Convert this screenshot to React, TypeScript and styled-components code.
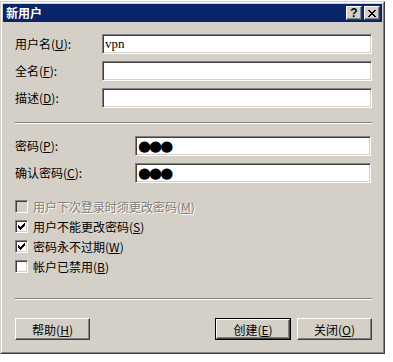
import * as React from 'react';
import styled, { createGlobalStyle, css } from 'styled-components';

const FACE = '#d4d0c8';
const SHADOW = '#808080';
const DARK = '#404040';

const GlobalStyle = createGlobalStyle`
    html, body {
        margin: 0;
        padding: 0;
        background: #fff;
    }
    body {
        font-family: "Noto Sans CJK SC", "Liberation Sans", sans-serif;
        font-size: 12px;
        color: #000;
    }
`;

const Window = styled.div`
    box-sizing: border-box;
    width: 385px;
    height: 353px;
    margin-top: 1px;
    display: flex;
    flex-direction: column;
    background: ${FACE};
    padding: 1px;
    border: 1px solid;
    border-color: ${FACE} ${DARK} ${DARK} ${FACE};
    position: relative;

    &::before {
        content: '';
        position: absolute;
        inset: 0;
        border: 1px solid;
        border-color: #fff ${SHADOW} ${SHADOW} #fff;
        pointer-events: none;
    }
`;

const TitleBar = styled.div`
    height: 18px;
    margin: 1px 1px 0 1px;
    background: #0a246a;
    display: flex;
    align-items: center;
    padding: 0 2px 0 3px;
`;

const Title = styled.div`
    flex: 1;
    color: #fff;
    font-weight: bold;
    font-size: 12px;
    line-height: 18px;
`;

const raised = css`
    background: ${FACE};
    border: 1px solid;
    border-color: #fff ${DARK} ${DARK} #fff;
    box-shadow: inset -1px -1px ${SHADOW}, inset 1px 1px ${FACE};
`;

const TitleButton = styled.div`
    box-sizing: border-box;
    width: 16px;
    height: 14px;
    ${raised};
    display: flex;
    align-items: center;
    justify-content: center;
    font-family: "Liberation Sans", sans-serif;
    font-weight: bold;
    font-size: 12px;
    line-height: 1;
    color: #000;

    & + & {
        margin-left: 2px;
    }
`;

const Body = styled.div`
    flex: 1;
    display: flex;
    flex-direction: column;
    padding: 12px 11px 0 13px;
`;

const FieldGrid = styled.div<{ $labelWidth: number }>`
    display: grid;
    grid-template-columns: ${(p) => p.$labelWidth}px 1fr;
    row-gap: 7px;
    align-items: center;
`;

const Label = styled.label`
    white-space: nowrap;
    line-height: 20px;
`;

const Key = styled.span`
    text-decoration: underline;
`;

const TextBox = styled.div<{ $trimRight?: boolean }>`
    box-sizing: border-box;
    height: 20px;
    margin-right: ${(p) => (p.$trimRight ? '1px' : '0')};
    background: #fff;
    border: 1px solid;
    border-color: ${SHADOW} #fff #fff ${SHADOW};
    box-shadow: inset 1px 1px ${DARK}, inset -1px -1px ${FACE};
    padding: 0 2px;
    display: flex;
    align-items: center;
    font-family: "Liberation Serif", serif;
    font-size: 13px;
`;

const Dots = styled.span`
    font-family: "DejaVu Sans", sans-serif;
    font-size: 15px;
    letter-spacing: -2px;
    line-height: 1;
`;

const Separator = styled.hr<{ $above: number; $below: number }>`
    margin: ${(p) => p.$above}px 0 ${(p) => p.$below}px 0;
    height: 0;
    border: none;
    border-top: 1px solid ${SHADOW};
    border-bottom: 1px solid #fff;
`;

const CheckList = styled.div`
    display: flex;
    flex-direction: column;
    margin-top: 13px;
`;

const CheckRow = styled.div<{ $disabled?: boolean }>`
    height: 20px;
    display: flex;
    align-items: center;
    gap: 5px;
    color: ${(p) => (p.$disabled ? SHADOW : '#000')};
    text-shadow: ${(p) => (p.$disabled ? '1px 1px #fff' : 'none')};
`;

const Box = styled.span<{ $disabled?: boolean }>`
    box-sizing: border-box;
    width: 13px;
    height: 13px;
    flex: none;
    background: ${(p) => (p.$disabled ? FACE : '#fff')};
    border: 1px solid;
    border-color: ${SHADOW} #fff #fff ${SHADOW};
    box-shadow: inset 1px 1px ${DARK}, inset -1px -1px ${FACE};
    display: flex;
    align-items: center;
    justify-content: center;
`;

const ButtonRow = styled.div`
    display: flex;
    align-items: center;
`;

const Spacer = styled.div`
    flex: 1;
`;

const Button = styled.div<{ $default?: boolean }>`
    box-sizing: border-box;
    width: 75px;
    height: 22px;
    display: flex;
    align-items: center;
    justify-content: center;
    ${raised};
    ${(p) =>
        p.$default &&
        css`
            outline: 1px solid #000;
            width: 74px;
            height: 20px;
            margin: 1px 7px 1px 1px;
        `}
`;

function Check() {
    const cols = [2, 3, 4, 3, 2, 1, 0];
    return (
        <svg width="7" height="7" viewBox="0 0 7 7" shapeRendering="crispEdges">
            {cols.map((y, x) => (
                <rect key={x} x={x} y={y} width="1" height="3" fill="#000" />
            ))}
        </svg>
    );
}

function CloseGlyph() {
    return (
        <svg width="8" height="7" viewBox="0 0 8 7" shapeRendering="crispEdges">
            {[0, 1, 2, 3, 4, 5, 6].map((i) => (
                <React.Fragment key={i}>
                    <rect x={i} y={i} width="2" height="1" fill="#000" />
                    <rect x={6 - i} y={i} width="2" height="1" fill="#000" />
                </React.Fragment>
            ))}
        </svg>
    );
}

interface CheckItem {
    text: string;
    key: string;
    checked: boolean;
    disabled?: boolean;
}

const checks: CheckItem[] = [
    { text: '用户下次登录时须更改密码', key: 'M', checked: false, disabled: true },
    { text: '用户不能更改密码', key: 'S', checked: true },
    { text: '密码永不过期', key: 'W', checked: true },
    { text: '帐户已禁用', key: 'B', checked: false },
];

export default function App(): React.ReactElement {
    return (
        <>
            <GlobalStyle />
            <Window>
                <TitleBar>
                    <Title>新用户</Title>
                    <TitleButton>?</TitleButton>
                    <TitleButton>
                        <CloseGlyph />
                    </TitleButton>
                </TitleBar>
                <Body>
                    <FieldGrid $labelWidth={87}>
                        <Label>
                            用户名(<Key>U</Key>):
                        </Label>
                        <TextBox>vpn</TextBox>
                        <Label>
                            全名(<Key>F</Key>):
                        </Label>
                        <TextBox />
                        <Label>
                            描述(<Key>D</Key>):
                        </Label>
                        <TextBox />
                    </FieldGrid>

                    <Separator $above={14} $below={12} />

                    <FieldGrid $labelWidth={120}>
                        <Label>
                            密码(<Key>P</Key>):
                        </Label>
                        <TextBox $trimRight>
                            <Dots>●●●</Dots>
                        </TextBox>
                        <Label>
                            确认密码(<Key>C</Key>):
                        </Label>
                        <TextBox $trimRight>
                            <Dots>●●●</Dots>
                        </TextBox>
                    </FieldGrid>

                    <CheckList>
                        {checks.map((c) => (
                            <CheckRow key={c.key} $disabled={c.disabled}>
                                <Box $disabled={c.disabled}>{c.checked && <Check />}</Box>
                                <span>
                                    {c.text}(<Key>{c.key}</Key>)
                                </span>
                            </CheckRow>
                        ))}
                    </CheckList>

                    <Separator $above={22} $below={18} />

                    <ButtonRow>
                        <Button>
                            帮助(<Key>H</Key>)
                        </Button>
                        <Spacer />
                        <Button $default>
                            创建(<Key>E</Key>)
                        </Button>
                        <Button>
                            关闭(<Key>O</Key>)
                        </Button>
                    </ButtonRow>
                </Body>
            </Window>
        </>
    );
}
